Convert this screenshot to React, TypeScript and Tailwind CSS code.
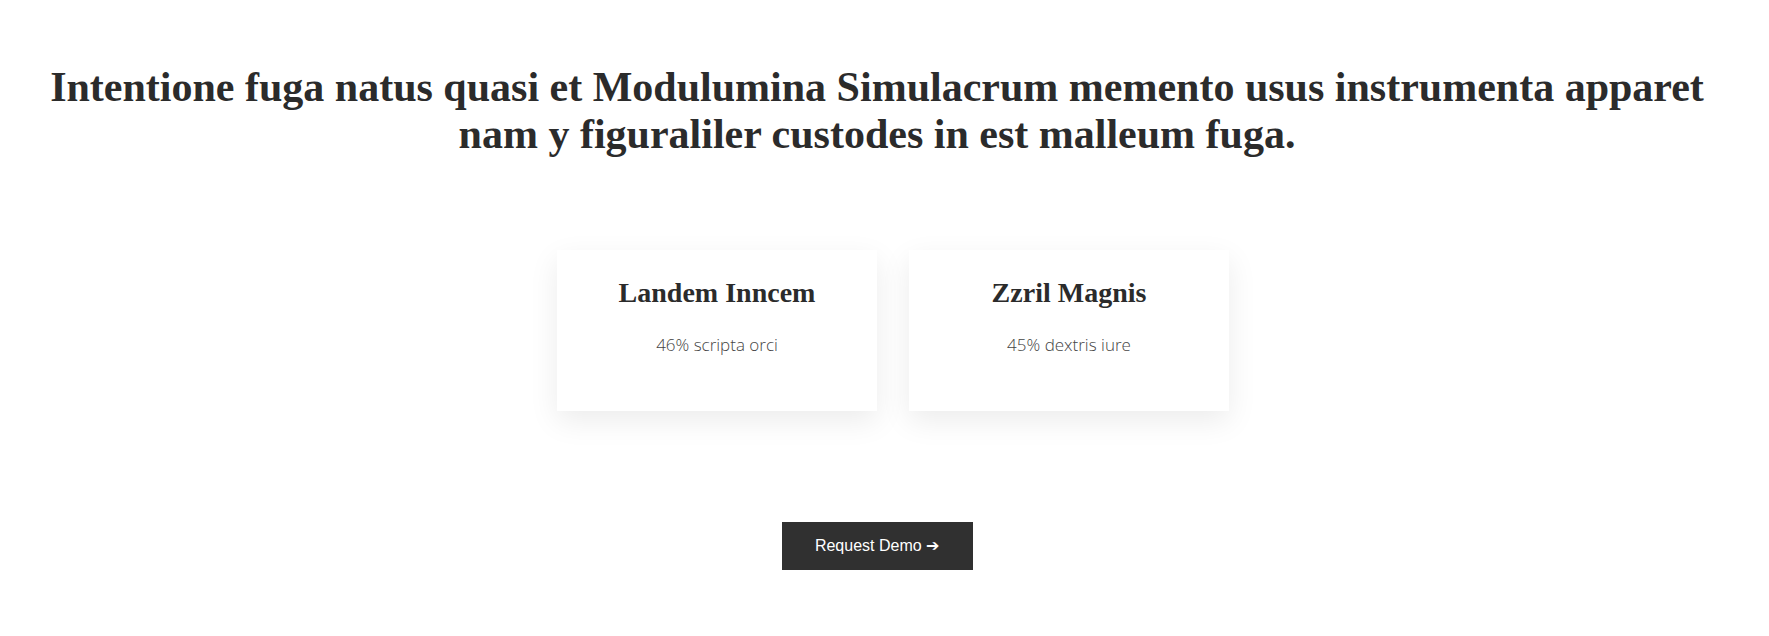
export default function App() {
  return (
    <div className="min-h-[636px] bg-white pr-[15px]">
      <section className="flex flex-col items-center pt-[64px]">
        <h1 className="max-w-[1740px] px-4 text-center text-[42px] font-bold leading-[47px] text-[#2b2b2b] [font-family:'Liberation_Serif',serif]">
          Intentione fuga natus quasi et Modulumina Simulacrum memento usus instrumenta apparet nam y figuraliler custodes in est malleum fuga.
        </h1>

        <div className="mt-[92px] flex justify-center">
          <StatCard title="Landem Inncem" text="46% scripta orci" />
          <StatCard title="Zzril Magnis" text="45% dextris iure" />
        </div>

        <button
          type="button"
          className="mt-[111px] h-12 w-[191px] bg-[#303030] text-base text-white [font-family:'Liberation_Sans',sans-serif]"
        >
          Request Demo ➔
        </button>
      </section>
    </div>
  );
}

function StatCard({ title, text }: { title: string; text: string }) {
  return (
    <div className="ml-8 flex h-[161px] w-80 flex-col items-center bg-white pt-[25px] shadow-[0_10px_28px_rgba(0,0,0,0.08)]">
      <h3 className="text-[28px] font-bold leading-9 text-[#2b2b2b] [font-family:'Liberation_Serif',serif]">
        {title}
      </h3>
      <p className="mt-[21px] text-[17px] font-light text-[#444] [font-family:'Open_Sans',sans-serif]">
        {text}
      </p>
    </div>
  );
}
